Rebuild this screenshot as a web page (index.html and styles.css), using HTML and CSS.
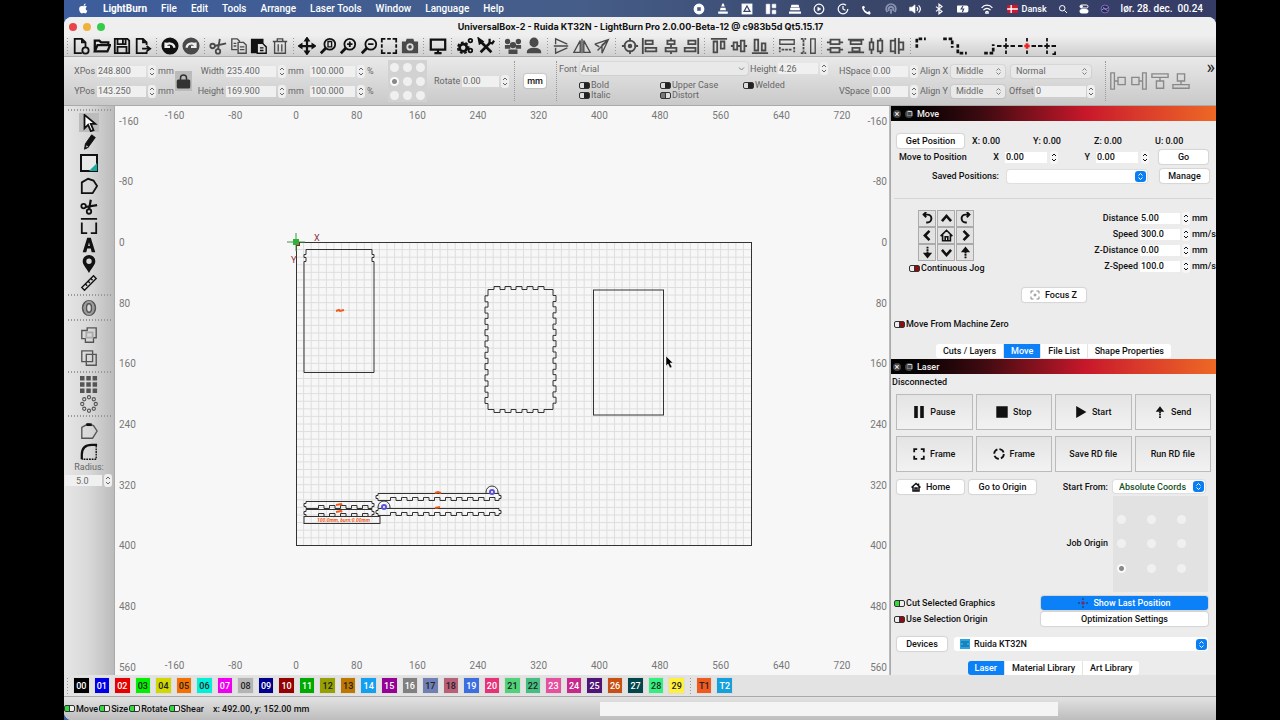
FILE: index.html
```
<!DOCTYPE html>
<html lang="en">
<head>
    <meta charset="UTF-8">
    <meta name="viewport" content="width=device-width, initial-scale=1.0">
    <title>UniversalBox-2 - LightBurn</title>
    <link rel="stylesheet" href="styles.css">
</head>
<body>
    <div class="screen">
        <nav class="menubar">
            <svg class="apple" viewBox="0 0 20 20"><path class="f" d="M14 1c0 2-1.500 4-4 4 0-2 2-4 4-4zM10 6c1.500-1 4-1.500 6 .8-3 2-2.500 6 .8 7.200C16 17 14.500 19 13 19c-1.200 0-1.600-.6-3-.6s-1.800.6-3 .6C4.500 19 2 14.500 2 11c0-5 4-6.500 8-5z"/></svg>
            <a class="app" href="#">LightBurn</a>
            <a href="#">File</a>
            <a href="#">Edit</a>
            <a href="#">Tools</a>
            <a href="#">Arrange</a>
            <a href="#">Laser Tools</a>
            <a href="#">Window</a>
            <a href="#">Language</a>
            <a href="#">Help</a>
            <div class="tray" id="tray"></div>
            <div class="right">
                <span class="lang"><svg class="flag" viewBox="0 0 12 9"><path fill="#d3152c" d="M0 0h12v9H0z"/><path stroke="#fff" stroke-width="1.500" d="M4.500 0v9M0 4.500h12"/></svg>Dansk</span>
                <svg class="icon" viewBox="0 0 20 20"><circle cx="8.500" cy="8.500" r="5.500"/><path d="M13 13l5 5"/></svg>
                <svg class="icon" viewBox="0 0 20 20"><rect x="2" y="2" width="16" height="6" rx="3"/><rect class="f" x="2" y="11" width="16" height="7" rx="3"/><circle class="f" cx="5" cy="5" r="2"/></svg>
                <svg class="icon" viewBox="0 0 20 20"><circle cx="10" cy="10" r="8" fill="#2a2560" stroke="#7b6bb0"/><path stroke="#55d0f0" d="M4 12c4-6 8 2 12-5"/><path stroke="#f06aa8" d="M6 7c3 0 6 6 9 6"/></svg>
                <span class="clock">lør. 28. dec.&nbsp; 00.24</span>
            </div>
        </nav>

        <div class="window">
            <header class="titlebar">
                <div class="lights"><i class="red"></i><i class="yellow"></i><i class="green"></i></div>
                <h1>UniversalBox-2 - Ruida KT32N - LightBurn Pro 2.0.00-Beta-12 @ c983b5d Qt5.15.17</h1>
            </header>

            <div class="toolbar" id="toolbar"></div>

            <div class="props">
                <div class="size-grid">
                    <label for="xpos">XPos</label><input id="xpos" value="248.800"><i class="step"></i><span>mm</span>
                    <button class="lock" aria-label="Lock ratio"><svg class="icon" viewBox="0 0 20 20"><path d="M6 9V6a4 4 0 0 1 8 0v3"/><rect class="f" x="2" y="9" width="16" height="10" rx="1"/></svg></button>
                    <label for="width">Width</label><input id="width" value="235.400"><i class="step"></i><span>mm</span>
                    <input id="wpct" aria-label="Width percent" value="100.000"><i class="step"></i><span>%</span>
                    <label for="ypos">YPos</label><input id="ypos" value="143.250"><i class="step"></i><span>mm</span>
                    <label for="height">Height</label><input id="height" value="169.900"><i class="step"></i><span>mm</span>
                    <input id="hpct" aria-label="Height percent" value="100.000"><i class="step"></i><span>%</span>
                </div>
                <div class="anchor dots" data-name="anchor" data-checked="3"></div>
                <div class="rotate"><label for="rotate">Rotate</label><input id="rotate" value="0.00"><i class="step"></i></div>
                <i class="divider"></i>
                <button class="btn unit">mm</button>
                <i class="divider"></i>
                <div class="font-box">
                    <div class="font-row">
                        <label for="font">Font</label>
                        <select id="font" class="flat wide"><option>Arial</option></select>
                        <label for="fheight">Height</label><input id="fheight" value="4.26"><i class="step"></i>
                    </div>
                    <div class="font-flags">
                        <label><input type="checkbox" class="toggle dark">Bold</label>
                        <label><input type="checkbox" class="toggle dark">Upper Case</label>
                        <label><input type="checkbox" class="toggle dark">Welded</label>
                        <label><input type="checkbox" class="toggle dark">Italic</label>
                        <label><input type="checkbox" class="toggle dark" checked>Distort</label>
                    </div>
                </div>
                <div class="space-grid">
                    <label for="hspace">HSpace</label><input id="hspace" value="0.00"><i class="step"></i>
                    <label for="alignx">Align X</label><select id="alignx" class="flat"><option>Middle</option></select>
                    <select class="flat normal" aria-label="Text mode"><option>Normal</option></select>
                    <label for="vspace">VSpace</label><input id="vspace" value="0.00"><i class="step"></i>
                    <label for="aligny">Align Y</label><select id="aligny" class="flat"><option>Middle</option></select>
                    <div class="offset"><label for="offset">Offset</label><input id="offset" value="0"><i class="step"></i></div>
                </div>
                <i class="divider"></i>
                <div class="dock" id="dock"></div>
                <button class="more" aria-label="More">»</button>
            </div>

            <main class="main">
                <aside class="tools">
                    <div id="tools"></div>
                    <label for="radius">Radius:</label>
                    <div class="radius"><input id="radius" value="5.0"><i class="step"></i></div>
                </aside>

                <section class="canvas">
                    <svg id="canvas" viewBox="115 106 774 569"></svg>
                </section>

                <aside class="side">
                    <section class="panel">
                        <h2><button aria-label="Close">×</button><button aria-label="Float">❐</button>Move</h2>
                        <div class="move">
                            <div class="position">
                                <button class="btn">Get Position</button>
                                <span>X: 0.00</span><span>Y: 0.00</span><span>Z: 0.00</span><span>U: 0.00</span>
                            </div>
                            <div class="goto">
                                <span>Move to Position</span>
                                <label for="gox">X</label><input id="gox" value="0.00"><i class="step"></i>
                                <label for="goy">Y</label><input id="goy" value="0.00"><i class="step"></i>
                                <button class="btn">Go</button>
                            </div>
                            <div class="saved">
                                <label for="saved">Saved Positions:</label>
                                <select id="saved"><option></option></select>
                                <button class="btn">Manage</button>
                            </div>
                            <hr>
                            <div class="jog-row">
                                <div class="jog-box">
                                    <div class="jog" id="jog"></div>
                                    <label><input type="checkbox" class="toggle">Continuous Jog</label>
                                </div>
                                <div class="jog-values">
                                    <label for="dist">Distance</label><input id="dist" value="5.00"><i class="step"></i><span>mm</span>
                                    <label for="speed">Speed</label><input id="speed" value="300.0"><i class="step"></i><span>mm/s</span>
                                    <label for="zdist">Z-Distance</label><input id="zdist" value="0.00"><i class="step"></i><span>mm</span>
                                    <label for="zspeed">Z-Speed</label><input id="zspeed" value="100.0"><i class="step"></i><span>mm/s</span>
                                </div>
                            </div>
                            <button class="btn focus"><svg class="icon" viewBox="0 0 20 20"><path d="M7 2H2v5M13 2h5v5M7 18H2v-5M13 18h5v-5M10 7v6M7 10h6"/></svg>Focus Z</button>
                            <label class="zero"><input type="checkbox" class="toggle">Move From Machine Zero</label>
                        </div>
                        <div class="tabs">
                            <button>Cuts / Layers</button><button class="active">Move</button><button>File List</button><button>Shape Properties</button>
                        </div>
                    </section>

                    <section class="panel">
                        <h2><button aria-label="Close">×</button><button aria-label="Float">❐</button>Laser</h2>
                        <p class="state">Disconnected</p>
                        <div class="actions" id="actions"></div>
                        <div class="origin">
                            <div class="origin-buttons">
                                <button class="btn"><svg class="icon" viewBox="0 0 20 20"><path d="M1 11l9-8 9 8M4 9v9h12V9M15 3v4M8 18v-6h4v6" stroke-width="3"/></svg>Home</button>
                                <button class="btn">Go to Origin</button>
                            </div>
                            <label for="start">Start From:</label>
                            <select id="start" class="coords"><option>Absolute Coords</option></select>
                            <span class="job-label">Job Origin</span>
                            <div class="job dots" data-name="job" data-checked="6"></div>
                        </div>
                        <div class="options">
                            <label><input type="checkbox" class="toggle" checked>Cut Selected Graphics</label>
                            <button class="btn blue"><svg class="icon" viewBox="0 0 20 20"><path stroke="#17305c" d="M10 0v4M10 16v4M0 10h4M16 10h4"/><path stroke="#a8102c" d="M10 6v8M6 10h8"/></svg>Show Last Position</button>
                            <label><input type="checkbox" class="toggle">Use Selection Origin</label>
                            <button class="btn">Optimization Settings</button>
                        </div>
                        <div class="devices">
                            <button class="btn">Devices</button>
                            <div class="device">
                                <svg viewBox="0 0 10 10"><path fill="#2aa5e0" d="M0 0h10v10H0z"/><path fill="none" stroke="#0b5f94" d="M1 3h8M1 7h8M3 5h4"/></svg>
                                <select aria-label="Device"><option>Ruida KT32N</option></select>
                            </div>
                        </div>
                        <div class="tabs last">
                            <button class="active">Laser</button><button>Material Library</button><button>Art Library</button>
                        </div>
                    </section>
                </aside>
            </main>

            <div class="palette" id="palette"></div>

            <footer class="status">
                <label><input type="checkbox" class="toggle" checked>Move</label>
                <label><input type="checkbox" class="toggle" checked>Size</label>
                <label><input type="checkbox" class="toggle" checked>Rotate</label>
                <label><input type="checkbox" class="toggle" checked>Shear</label>
                <span class="coord">x: 492.00, y: 152.00 mm</span>
                <div class="progress"></div>
            </footer>
        </div>
    </div>
    <script src="script.js"></script>
</body>
</html>
```

FILE: styles.css
```
* {
    box-sizing: border-box;
}
body {
    margin: 0;
    background: #000;
    color: #111;
    font-family: Roboto, "Liberation Sans", sans-serif;
    font-size: 9px;
    line-height: 12px;
}
button, input, select {
    font: inherit;
    color: inherit;
    margin: 0;
    padding: 0;
    border: none;
    background: none;
}
a {
    color: inherit;
    text-decoration: none;
}
label, span, button {
    white-space: nowrap;
}
.icon {
    display: block;
    width: 18px;
    height: 18px;
    fill: none;
    stroke: currentColor;
    stroke-width: 2;
}
.f {
    fill: currentColor;
}
.screen {
    display: flex;
    flex-direction: column;
    min-height: 100vh;
    margin: 0 64px;
    background: linear-gradient(90deg, #3d5d9c, #455d88 45%, #394569 70%, #353c66);
}

/* menu bar */
.menubar {
    display: flex;
    align-items: center;
    gap: 14px;
    height: 17px;
    padding: 0 13px 0 14px;
    color: #fff;
    font-size: 10px;
    font-weight: 500;
}
.menubar .app {
    font-weight: 700;
}
.menubar .icon {
    width: 10px;
    height: 10px;
}
.apple {
    width: 11px;
    height: 11px;
}
.tray {
    display: flex;
    gap: 12px;
    margin-left: auto;
}
.tray .icon {
    width: 12px;
    height: 12px;
}
.right {
    display: flex;
    align-items: center;
    gap: 11px;
    font-size: 9px;
}
.clock {
    font-size: 10px;
}
.lang {
    display: flex;
    align-items: center;
    gap: 4px;
}
.flag {
    width: 11px;
    height: 8px;
}

/* window */
.window {
    flex: 1;
    display: flex;
    flex-direction: column;
    background: #ececec;
    border-radius: 8px 8px 0 8px;
    overflow: hidden;
}
.titlebar {
    display: flex;
    align-items: center;
    height: 19px;
    padding: 0 5px;
    background: #efefef;
}
.titlebar h1 {
    flex: 1;
    margin: 0;
    padding-right: 35px;
    text-align: center;
    font-family: Inter, "Liberation Sans", sans-serif;
    font-size: 9px;
    font-weight: 700;
}
.lights {
    display: flex;
    gap: 6px;
    width: 36px;
}
.lights i {
    width: 8px;
    height: 8px;
    border-radius: 50%;
}
.red { background: #e8454b; }
.yellow { background: #f0b03c; }
.green { background: #36cc4b; }

.toolbar {
    display: flex;
    align-items: center;
    height: 21px;
    padding: 0 158px 0 0;
    background: linear-gradient(#eee, #cfcfcf);
    border-bottom: 1px solid #aaa;
}
.toolbar button {
    flex: 1;
    min-width: 0;
    display: flex;
    justify-content: center;
    color: #111;
}
.toolbar button.mid {
    color: #4a4a4a;
}
.sep {
    flex: none;
    width: 7px;
    height: 18px;
    background: radial-gradient(circle, #999 0.5px, transparent 1px) 0 0 / 7px 3px;
}

/* properties bar */
.props {
    display: flex;
    align-items: center;
    height: 49px;
    padding-left: 10px;
    color: #666;
    background: linear-gradient(#e9e9e9, #c9c9c9);
    border-bottom: 1px solid #aaa;
}
.props input:not([type]), .tools input {
    width: 100%;
    min-width: 0;
    height: 11px;
    padding-left: 1px;
    background: #f0f0f0;
}
.step {
    width: 8px;
    height: 13px;
    border-radius: 3px;
    color: #666;
    background: #efefef;
    display: block;
}
.step svg {
    display: block;
    width: 8px;
    height: 13px;
    fill: none;
    stroke: currentColor;
}
.size-grid {
    display: grid;
    grid-template-columns: 21px 49px 8px 15px 20px 27px 50px 8px 20px 45px 8px 10px;
    grid-template-rows: 20px 20px;
    column-gap: 2px;
    align-items: center;
}
.size-grid label {
    text-align: right;
}
.lock {
    grid-row: span 2;
    display: flex;
    align-items: center;
    justify-content: center;
    height: 20px;
    width: 17px;
    background: #bbb;
    color: #333;
}
.lock .icon {
    width: 15px;
}
.dots {
    display: grid;
    grid-template-columns: repeat(3, 1fr);
    justify-items: center;
    align-items: center;
}
.dots input {
    appearance: none;
    width: 9px;
    height: 9px;
    border-radius: 50%;
    background: #f0f0f0;
}
.dots input:checked {
    background: radial-gradient(circle, #888 2px, #fafafa 3px);
}
.anchor {
    width: 39px;
    height: 42px;
    margin-left: 11px;
    background: #d2d2d2;
}
.rotate {
    display: grid;
    grid-template-columns: 26px 37px 8px;
    gap: 2px;
    align-items: center;
    margin-left: 7px;
}
.divider {
    width: 1px;
    height: 40px;
    margin: 0 5px;
    border-left: 1px dotted #999;
}
.btn {
    display: flex;
    align-items: center;
    justify-content: center;
    height: 14px;
    border-radius: 3px;
    background: #fff;
    color: #111;
    box-shadow: 0 0 1px 1px #0000001a;
    font-weight: 500;
}
.unit {
    width: 22px;
    margin: 0 5px 0 4px;
}
.unit + .divider {
    margin-right: 2px;
}
.font-box {
    width: 276px;
}
.font-row {
    display: grid;
    grid-template-columns: 19px 168px 26px 40px 8px;
    column-gap: 2px;
    align-items: center;
    margin-bottom: 5px;
}
.font-flags {
    display: grid;
    grid-template-columns: 81px 83px 1fr;
    line-height: 10px;
    padding-left: 20px;
}
.font-flags label, .jog-box label, .options label, .zero, .status label {
    display: flex;
    align-items: center;
    gap: 1px;
}
.toggle {
    appearance: none;
    flex: none;
    width: 11px;
    height: 7px;
    border: 1px solid #333;
    border-radius: 2px;
    background: linear-gradient(90deg, #eee 45%, #333 45%, #333 55%, #8d0c12 55%);
}
.toggle:checked {
    background: linear-gradient(90deg, #2fdc3a 45%, #333 45%, #333 55%, #eee 55%);
}
.toggle.dark {
    background: linear-gradient(90deg, #ddd 45%, #222 45%);
}
.toggle.dark:checked {
    background: linear-gradient(90deg, #777 45%, #333 45%, #333 55%, #ddd 55%);
}
select {
    appearance: none;
    height: 13px;
    padding-left: 6px;
    border-radius: 3px;
    background: #fff url('data:image/svg+xml,<svg xmlns="http://www.w3.org/2000/svg" width="11" height="11"><rect width="11" height="11" rx="3" fill="%23087ff5"/><path d="M3.500 4.500l2-2 2 2M3.500 6.500l2 2 2-2" fill="none" stroke="white"/></svg>') no-repeat right 1px center;
    box-shadow: 0 0 1px 1px #00000010;
}
select.flat {
    padding-left: 5px;
    background: #e9e9e9 url('data:image/svg+xml,<svg xmlns="http://www.w3.org/2000/svg" width="11" height="11"><path d="M3.500 4.500l2-2 2 2M3.500 6.500l2 2 2-2" fill="none" stroke="gray"/></svg>') no-repeat right 1px center;
}
select.wide {
    padding-left: 1px;
    background-image: url('data:image/svg+xml,<svg xmlns="http://www.w3.org/2000/svg" width="11" height="11"><path d="M3 4.500l2.500 2.500 2.500-2.500" fill="none" stroke="gray"/></svg>');
}
.space-grid {
    display: grid;
    grid-template-columns: 31px 36px 8px 29px 54px 84px;
    grid-template-rows: 20px 20px;
    column-gap: 2px;
    align-items: center;
    margin-left: 4px;
}
.normal {
    margin-left: 4px;
}
.offset {
    display: grid;
    grid-template-columns: 25px 51px 8px;
    gap: 1px;
    align-items: center;
    margin-left: 2px;
}
.space-grid + .divider {
    margin-left: 14px;
    margin-right: 3px;
}
.dock {
    display: flex;
    gap: 3px;
    color: #888;
}
.more {
    align-self: flex-start;
    margin: 3px 0 0 auto;
    padding-right: 1px;
    font-size: 18px;
    line-height: 14px;
    color: #222;
}

/* work area */
.main {
    display: grid;
    grid-template-columns: 51px minmax(0, 1fr) 326px;
}
.tools {
    background: linear-gradient(90deg, #e6e6e6, #d8d8d8 50%, #bbb);
    border-right: 1px solid #aaa;
    color: #666;
    text-align: center;
    padding-top: 1px;
}
.tools button {
    display: flex;
    align-items: center;
    justify-content: center;
    width: 20px;
    height: 19px;
    margin: 0 auto;
    color: #111;
}
.tools button.tall {
    height: 23px;
}
.tools button.mid {
    color: #555;
}
.tools button.active {
    background: #bcbcbc;
    height: 19px;
}
.tools .sep {
    display: block;
    width: 44px;
    height: 6px;
    margin: 0 auto;
    background: radial-gradient(circle, #999 0.5px, transparent 1px) 0 0 / 3px 6px;
}
.tools > label {
    display: block;
}
.radius {
    display: grid;
    grid-template-columns: 37px 8px;
    align-items: center;
    gap: 2px;
    margin-top: 1px;
    padding-left: 1px;
}
.tools input {
    padding-left: 11px;
}
.canvas {
    background: #f7f7f7;
    border-right: 1px solid #bbb;
}
.canvas svg {
    display: block;
    width: 100%;
}
.ruler {
    fill: #777;
    font-size: 10px;
}
.cut {
    fill: none;
    stroke: #333;
}
.mark {
    fill: none;
    stroke: #f05a1a;
}

/* side panels */
.side {
    background: #ececec;
    border-left: 1px solid #aaa;
    font-weight: 500;
}
.panel h2 {
    display: flex;
    align-items: center;
    gap: 4px;
    height: 15px;
    margin: 0;
    padding-left: 2px;
    color: #eee;
    font-size: 9px;
    font-weight: 500;
    background: linear-gradient(90deg, #050203 8%, #3d0a10 28%, #c8182b 60%, #d8372b 75%, #ee6825);
}
.panel h2 button {
    width: 8px;
    height: 8px;
    border-radius: 50%;
    background: #444;
    line-height: 8px;
    font-size: 9px;
}
.panel h2 button + button {
    font-size: 6px;
}
.side input:not([type]) {
    width: 100%;
    min-width: 0;
    height: 11px;
    padding-left: 1px;
    background: #fff;
}
.side .step {
    color: #111;
    background: #f6f6f6;
}
.side .btn .icon {
    width: 10px;
    height: 10px;
    margin-right: 5px;
}
.move {
    padding: 13px 0 14px;
}
.position {
    display: grid;
    grid-template-columns: 67px 53px 53px 53px 1fr;
    gap: 8px;
    align-items: center;
    padding-left: 6px;
}
.goto {
    display: grid;
    grid-template-columns: 80px 20px 42px 8px 32px 42px 8px 56px;
    column-gap: 3px;
    align-items: center;
    margin: 2px 0 5px;
    padding-left: 8px;
}
.goto label {
    text-align: right;
    padding-right: 3px;
}
.goto .btn {
    margin-left: 7px;
}
.saved {
    display: grid;
    grid-template-columns: 1fr 140px 54px;
    column-gap: 8px;
    align-items: center;
    padding: 0 7px 0 5px;
}
.saved label {
    text-align: right;
}
.saved .btn {
    margin-left: 5px;
}
.move hr {
    margin: 15px 3px 11px;
    border: none;
    border-top: 1px solid #d6d6d6;
}
.jog-row {
    display: flex;
    justify-content: space-between;
    padding: 0 0 0 18px;
}
.jog {
    display: grid;
    grid-template-columns: repeat(3, 18px);
    grid-auto-rows: 17px;
    column-gap: 1px;
    margin: 0 0 1px 9px;
}
.jog button {
    display: flex;
    align-items: center;
    justify-content: center;
    border: 1px solid #aaa;
    background: #e2e2e2;
}
.jog .icon {
    width: 13px;
    height: 13px;
    stroke-width: 3;
}
.jog-values {
    display: grid;
    grid-template-columns: auto 40px 8px 24px;
    grid-auto-rows: 16px;
    column-gap: 2px;
    align-items: center;
}
.jog-values label {
    text-align: right;
}
.focus {
    width: 64px;
    margin: 14px auto;
}
.focus .icon {
    color: #888;
}
.zero {
    padding: 2px 0 0 3px;
}
.tabs {
    display: flex;
    justify-content: center;
    padding-bottom: 1px;
}
.tabs button {
    height: 14px;
    padding: 0 7px;
    background: #fff;
    border-right: 1px solid #e3e3e3;
}
.tabs button.active {
    background: #0b80f7;
    color: #fff;
}
.tabs button:first-child {
    border-radius: 3px 0 0 3px;
}
.tabs button:last-child {
    border-radius: 0 3px 3px 0;
    border-right: none;
}
.state {
    margin: 2px 0 6px 1px;
}
.actions {
    display: grid;
    grid-template-columns: repeat(4, 1fr);
    grid-auto-rows: 36px;
    gap: 6px 3px;
    padding: 0 5px;
}
.actions button {
    display: flex;
    align-items: center;
    justify-content: center;
    gap: 5px;
    border: 1px solid #bbb;
    background: linear-gradient(#e4e4e4, #f2f2f2);
}
.actions .icon {
    width: 12px;
    height: 12px;
    stroke-width: 3;
}
.origin {
    display: grid;
    grid-template-columns: 140px 1fr 95px;
    column-gap: 5px;
    padding: 8px 8px 0 6px;
}
.origin > label, .job-label {
    text-align: right;
    align-self: center;
}
.origin-buttons {
    display: flex;
    gap: 5px;
}
.origin-buttons .btn {
    width: 67px;
}
.coords {
    width: 92px;
    color: #17501c;
}
.job-label {
    grid-column: 2;
}
.job {
    grid-template-columns: repeat(3, 30px);
    justify-items: start;
    height: 96px;
    margin-top: 2px;
    padding: 11px 0 11px 4px;
    background: #e2e2e2;
}
.options {
    display: grid;
    grid-template-columns: 1fr 167px;
    row-gap: 2px;
    padding: 4px 8px 0 3px;
}
.btn.blue {
    background: #0b80f7;
    color: #fff;
}
.devices {
    display: grid;
    grid-template-columns: 50px 1fr;
    gap: 7px;
    padding: 11px 8px 10px 6px;
}
.device {
    display: flex;
    align-items: center;
    gap: 2px;
    padding-left: 6px;
    background: #fff;
    border-radius: 3px;
}
.device svg {
    width: 10px;
    height: 10px;
}
.device select {
    flex: 1;
    padding-left: 2px;
    box-shadow: none;
}
.tabs.last {
    padding-bottom: 0;
}

/* palette and status bar */
.palette {
    display: flex;
    align-items: center;
    height: 22px;
    padding: 0 481px 0 0;
    background: #e3e3e3;
    border-bottom: 1px solid #aaa;
}
.palette button {
    flex: 1;
    height: 17px;
    margin: 0 2px;
    border: 1px solid #ddd;
    font-weight: 500;
}
.status {
    flex: 1;
    display: flex;
    align-items: center;
    gap: 1px;
    min-height: 23px;
    font-weight: 500;
    background: linear-gradient(#e2e2e2, #bdbdbd);
}
.coord {
    margin-left: 8px;
}
.progress {
    width: 458px;
    height: 14px;
    margin: 0 158px 0 auto;
    background: #f4f4f4;
}
```

FILE: script.js
```
const icon = (inner) => `<svg class="icon" viewBox="0 0 20 20">${inner}</svg>`;

// every entry: [label, drawing, class]
const topTools = [
    [
        ['New', '<path d="M11 18H3V2h8l4 4v5M11 2v4h4"/><circle cx="15" cy="15" r="3.500"/>'],
        ['Open', '<path d="M2 16V4h5l2 2h8v3M2 16l3-7h14l-3 7z" stroke-width="2.500"/>'],
        ['Save', '<path d="M2 2h14l2 2v14H2zM5 2v6h9V2M5 18v-7h10v7M11 3v4"/>'],
        ['Export', '<path d="M14 9V6l-4-4H3v16h11v-2M10 2v4h4M9 13h8M14 10l4 3-4 3"/>']
    ],
    [
        ['Undo', '<circle class="f" cx="10" cy="10" r="8.500"/><path stroke="#eee" stroke-width="2.500" d="M5 10c2-4 9-4 10 2M5 6v5h5"/>'],
        ['Redo', '<circle class="f" cx="10" cy="10" r="8.500"/><path stroke="#eee" stroke-width="2.500" d="M15 10c-2-4-9-4-10 2M15 6v5h-5"/>', 'mid']
    ],
    [
        ['Cut', '<circle cx="4" cy="10" r="2.500"/><circle cx="10" cy="16" r="2.500"/><path d="M6 10l13-3M10 14l2-12"/>', 'mid'],
        ['Copy', '<path d="M8 14H2V2h6l3 3M9 6h6l3 3v9H9zM4 7h3M4 10h3M11 11h5M11 14h5" stroke-width="1.500"/>', 'mid'],
        ['Paste', '<path class="f" d="M2 3h12v4H8v10H2z"/><path d="M8 7h6l4 4v7H8zM11 12h4M11 15h4" stroke-width="1.500" fill="#ddd"/>'],
        ['Delete', '<path d="M2 5h16M7 5V2h6v3M4 5v13h12V5M8 8v8M12 8v8" stroke-width="1.500"/>', 'mid']
    ],
    [
        ['Pan', '<path d="M10 3v14M3 10h14" stroke-width="2.500"/><path class="f" d="M10 1l2 3H8zM10 19l2-3H8zM1 10l3-2v4zM19 10l-3-2v4z"/>'],
        ['Zoom page', '<circle cx="12" cy="8" r="6"/><path d="M8 12l-6 6" stroke-width="3"/><path d="M10 5h4v6h-4z" stroke-width="1.500"/>'],
        ['Zoom in', '<circle cx="12" cy="8" r="6"/><path d="M8 12l-6 6" stroke-width="3"/><path d="M9 8h6M12 5v6"/>'],
        ['Zoom out', '<circle cx="12" cy="8" r="6"/><path d="M8 12l-6 6" stroke-width="3"/><path d="M9 8h6"/>'],
        ['Frame selection', '<path d="M2 6V2h4M14 2h4v4M18 14v4h-4M6 18H2v-4M8 2h4M8 18h4M2 8v4M18 8v4"/>'],
        ['Camera', '<path class="f" d="M2 6h4l1-3h6l1 3h4v11H2z"/><circle cx="10" cy="11" r="3" stroke="#ddd"/>', 'mid']
    ],
    [['Preview', '<path d="M2 3h16v11H2zM10 14v4M6 18h8" stroke-width="2.500"/>']],
    [
        ['Settings', '<circle cx="8" cy="12" r="4" stroke-width="3"/><circle cx="8" cy="12" r="6" stroke-dasharray="3 2"/><circle cx="16" cy="4" r="2"/><circle cx="16" cy="15" r="2"/>'],
        ['Device settings', '<path d="M4 17L15 6M4 5l12 12" stroke-width="3"/><path d="M14 2v4l3 1 2-3M2 2l4 3-3 2z" stroke-width="2.500"/>']
    ],
    [
        ['Group', '<circle class="f" cx="10" cy="9" r="2.500"/><circle class="f" cx="4" cy="5" r="2"/><circle class="f" cx="16" cy="5" r="2"/><path class="f" d="M6 18v-3h8v3zM2 12v-2h4v2zM14 12v-2h4v2z"/>', 'mid'],
        ['User', '<ellipse class="f" cx="10" cy="6" rx="4" ry="4.500"/><path class="f" d="M3 17c0-3 4-4 7-4s7 1 7 4z"/>', 'mid']
    ],
    [
        ['Mirror vertical', '<path d="M4 8V2l13 6M4 12v6l13-6M2 10h16" stroke-width="1.500"/>', 'mid'],
        ['Mirror horizontal', '<path d="M8 4v13H1zM12 4v13h7zM10 2v16" stroke-width="1.500"/>', 'mid'],
        ['Mirror line', '<path d="M2 8l15-5-7 15M17 3L5 15M2 8l5 3M10 18V9l7-6" stroke-width="1.500"/>', 'mid']
    ],
    [
        ['Center', '<circle cx="10" cy="10" r="6"/><circle class="f" cx="10" cy="10" r="1.500"/><path d="M10 1v4M10 15v4M1 10h4M15 10h4"/>', 'mid'],
        ['Align left', '<path d="M2 1v18M5 4h8v4H5zM5 12h12v4H5z"/>', 'mid'],
        ['Align center', '<path d="M10 1v3M10 8v4M10 16v3M6 4h8v4H6zM4 12h12v4H4z"/>', 'mid'],
        ['Align right', '<path d="M18 1v18M7 4h8v4H7zM3 12h12v4H3z"/>', 'mid']
    ],
    [
        ['Align top', '<path d="M1 2h18M4 5h4v12H4zM12 5h4v8h-4z"/>', 'mid'],
        ['Align middle', '<path d="M1 10h3M8 10h4M16 10h3M4 6h4v8H4zM12 4h4v12h-4z"/>', 'mid'],
        ['Align bottom', '<path d="M1 18h18M4 3h4v12H4zM12 7h4v8h-4z"/>', 'mid']
    ],
    [
        ['Same width', '<path d="M2 3h16v5H2z" stroke-width="1.500"/><path d="M2 11v6M18 11v6M4 14h12" stroke-dasharray="3 1"/>', 'mid'],
        ['Same height', '<path d="M13 2h5v16h-5z" stroke-width="1.500"/><path d="M2 2h6M2 18h6M5 3v14" stroke-dasharray="3 1"/>', 'mid']
    ],
    [
        ['Distribute V', '<path d="M1 6h4M15 6h4M1 14h4M15 14h4M5 3h10v5H5zM5 12h10v5H5z"/>', 'mid'],
        ['Distribute V centers', '<path d="M1 3h18M1 17h18M4 4h12v4H4zM6 12h8v4H6z"/>', 'mid'],
        ['Distribute H', '<path d="M5 1v5M5 14v5M15 1v3M15 16v3M3 6h4v8H3zM12 4h5v12h-5z"/>', 'mid'],
        ['Distribute H centers', '<path d="M8 1v18M12 1v18M3 4h5v12H3zM12 6h5v8h-5z"/>', 'mid']
    ],
    [
        ['Top left', '<path stroke-width="3" stroke-dasharray="4 2" d="M2 12V2h10"/>'],
        ['Top right', '<path stroke-width="3" stroke-dasharray="4 2" d="M8 2h10v10"/>'],
        ['Bottom left', '<path stroke-width="3" stroke-dasharray="4 2" d="M2 8v10h10"/>'],
        ['Bottom right', '<path stroke-width="3" stroke-dasharray="4 2" d="M8 18h10V8"/>'],
        ['Cross', '<path d="M10 1v4M10 15v4M0 10h5M15 10h5"/><path d="M10 7v6M7 10h6"/>'],
        ['Cross red', '<path d="M10 1v4M10 15v4M0 10h5M15 10h5"/><path stroke="#e22" stroke-width="3" d="M10 7v6M7 10h6"/>'],
        ['Cross corner', '<path d="M10 1v4M10 15v4M0 10h5M15 10h5"/><path d="M10 7v6M7 10h6M16 19h3v-3"/>']
    ]
];

let cells = '';
for (const y of [0, 7, 14]) for (const x of [0, 7, 14]) cells += `M${x} ${y}h5v5h-5z`;
let ring = '';
for (let i = 0; i < 8; i++) {
    const a = i * Math.PI / 4;
    ring += `<circle cx="${10 + 7.5 * Math.sin(a)}" cy="${10 + 7.5 * Math.cos(a)}" r="1.800" stroke-width="1.200"/>`;
}

const sideTools = [
    [
        ['Select', '<path d="M5 1v15l4-4 3 7 3-1-3-7h5z" fill="#fff"/>', 'active'],
        ['Draw', '<path class="f" d="M5 18l1-6L13 2l4 3-8 11z" stroke-width="1"/><path d="M7 13l3 2-4 2z" fill="#ddd" stroke-width="1"/>'],
        ['Rectangle', '<path fill="#e8e8e8" stroke-width="2.500" d="M1 1h18v18H1z"/><path fill="#19a89b" stroke="none" d="M19 10v9h-9z"/>', 'tall'],
        ['Polygon', '<path d="M2 6l7-4 6 2 4 6-5 8H2z"/>', 'tall'],
        ['Trim', '<circle cx="4" cy="9" r="2.500"/><circle cx="10" cy="15" r="2.500"/><path d="M6 10l13-2M10 13l2-11" stroke-width="2.500"/>'],
        ['Tabs', '<path d="M1 2h18M8 18H2V6M12 18h6V6"/>'],
        ['Text', '<path class="f" stroke="none" fill-rule="evenodd" d="M3 18L8 2h4l5 16h-4l-1-4H8l-1 4zM9 11h2l-1-4z"/>'],
        ['Marker', '<path class="f" fill-rule="evenodd" stroke="none" d="M10 20C6 13 3 11 3 7a7 7 0 0 1 14 0c0 4-3 6-7 13zM10 4a3 3 0 1 0 0 6 3 3 0 0 0 0-6z"/>'],
        ['Measure', '<path d="M2 15L15 2l3 3L5 18zM12 5l2 2M9 8l2 2M6 11l2 2" stroke-width="1.500"/>']
    ],
    [['Offset', '<ellipse cx="10" cy="10" rx="7" ry="8"/><ellipse cx="10" cy="10" rx="3" ry="5"/><ellipse cx="10" cy="10" rx="5" ry="7" stroke="#999"/>', 'mid']],
    [
        ['Union', '<path d="M2 5h6V2h10v11h-3v5H6v-4H2z" stroke-width="1.500"/><path stroke="#aaa" d="M7 7h7v6H7z"/>', 'mid tall'],
        ['Boolean', '<path d="M2 2h12v12H2zM7 6h11v12H7z" stroke-width="1.500"/>', 'mid tall']
    ],
    [
        ['Grid array', `<path class="f" stroke="none" d="${cells}"/>`, 'mid'],
        ['Circular array', ring, 'mid']
    ],
    [
        ['Start point', '<path d="M2 6l7-4 6 2 4 6-5 8H2z" stroke-width="1.500"/><path stroke="#111" stroke-width="3" d="M7 3h6"/>', 'mid tall'],
        ['Radius', '<path d="M2 18v-5C2 6 6 2 13 2h6" stroke-width="2.500"/><path stroke-dasharray="2 1" stroke-width="1.500" d="M18 3v15H2"/>']
    ]
];

const button = ([label, inner, cls]) =>
    `<button aria-label="${label}" class="${cls || ''}">${icon(inner)}</button>`;
const groups = (list) => list.map(g => '<i class="sep"></i>' + g.map(button).join('')).join('');
const fill = (id, html) => { document.getElementById(id).innerHTML = html; };

fill('toolbar', groups(topTools));
fill('tools', groups(sideTools));

fill('dock', [
    '<path d="M2 1h4v18H2zM6 10h4M10 6h8v8h-8z"/>',
    '<path d="M14 1h4v18h-4zM10 10h4M2 6h8v8H2z"/>',
    '<path d="M1 2h18v4H1zM10 6v4M6 10h8v8H6z"/>',
    '<path d="M1 14h18v4H1zM10 10v4M6 2h8v8H6z"/>'
].map(d => icon(d.replace('/>', ' stroke-width="1.500"/>'))).join(''));

fill('tray', [
    '<circle class="f" cx="10" cy="10" r="8"/><path fill="#455d88" stroke="none" d="M7 7h6v6H7z"/>',
    '<path class="f" stroke="none" d="M9 1h2l2 5H7zM6 8h8l1 4H5zM2 14h16v4H2z"/>',
    '<rect class="f" x="2" y="2" width="16" height="16"/><path stroke="#34456b" d="M10 5l5 9H5z"/>',
    '<path class="f" d="M2 2h6v16H2zM12 2h6v6h-6zM12 12h6v6h-6z" stroke-width="1"/>',
    '<path class="f" stroke="none" d="M4 3h12l1 4H3zM2 8h16v4H2zM0 14h20v4H0z"/>',
    '<circle cx="10" cy="10" r="8"/><path class="f" d="M8 7l5 3-5 3z" stroke-width="1"/>',
    '<circle cx="10" cy="10" r="8" stroke-dasharray="42 8"/><path d="M10 5v5l4 2"/>',
    '<path stroke-width="3" d="M3 6c0 6 5 11 12 12M3 6l3 2M15 18l-2-4"/>',
    '<path stroke="#8a93b3" stroke-width="3" d="M4 15a8 8 0 1 1 12 0M7 13a4 4 0 1 1 6 0M10 10v8"/>',
    '<path class="f" d="M1 7h4l5-4v14l-5-4H1z" stroke-width="1"/><path d="M13 7c2 2 2 4 0 6M16 4c4 4 4 8 0 12"/>',
    '<path d="M5 6l10 8-5 4V2l5 4L5 14"/>',
    '<rect x="0" y="5" width="18" height="10" rx="2" class="f"/><path stroke="#39436a" d="M10 5l-3 5h4l-2 5"/>',
    '<path d="M1 8c5-6 13-6 18 0M4 12c4-4 8-4 12 0M8 15c1-1 3-1 4 0v2H8z"/>'
].map(icon).join(''));

fill('jog', [
    ['Rotate left', '<path d="M4 4h6a6 6 0 0 1 0 12H8M8 0L4 4l4 4"/>'],
    ['Up', '<path d="M3 14l7-8 7 8" stroke-width="4"/>'],
    ['Rotate right', '<path d="M16 4h-6a6 6 0 0 0 0 12h2M12 0l4 4-4 4"/>'],
    ['Left', '<path d="M13 3l-7 7 7 7" stroke-width="4"/>'],
    ['Home', '<path stroke-width="2.500" d="M1 11l9-9 9 9M4 9v9h12V9M8 18v-6h4v6"/>'],
    ['Right', '<path d="M7 3l7 7-7 7" stroke-width="4"/>'],
    ['Z down', '<path stroke-dasharray="3 1" d="M10 1v12"/><path class="f" d="M6 12h8l-4 5z"/>'],
    ['Down', '<path d="M3 6l7 8 7-8" stroke-width="4"/>'],
    ['Z up', '<path stroke-dasharray="3 1" d="M10 19V7"/><path class="f" d="M6 8h8l-4-5z"/>']
].map(button).join(''));

fill('actions', [
    ['Pause', '<path stroke-width="6" d="M5 0v20M15 0v20"/>'],
    ['Stop', '<path class="f" d="M2 2h16v16H2z"/>'],
    ['Start', '<path class="f" stroke="none" d="M2 0l17 10L2 20z"/>'],
    ['Send', '<path stroke-dasharray="3 1" d="M10 20V8"/><path class="f" d="M6 8h8l-4-5z"/>'],
    ['Frame', '<path d="M7 2H2v5M13 2h5v5M2 13v5h5M18 13v5h-5"/>'],
    ['Frame', '<circle cx="10" cy="10" r="8" stroke-dasharray="9 3.500"/>'],
    ['Save RD file'],
    ['Run RD file']
].map(([t, d]) => `<button>${d ? icon(d) : ''}${t}</button>`).join(''));

document.querySelectorAll('.step').forEach(s => {
    s.innerHTML = '<svg viewBox="0 0 8 13"><path d="M2 5l2-2 2 2M2 8l2 2 2-2"/></svg>';
});
document.querySelectorAll('.dots').forEach(d => {
    for (let i = 0; i < 9; i++) {
        const on = i == d.dataset.checked ? 'checked' : '';
        d.innerHTML += `<input type="radio" name="${d.dataset.name}" aria-label="Origin ${i + 1}" ${on}>`;
    }
});

// layer colours, light ones get a dark number
const layers = ['#000000', '#0000e6', '#e60000', '#00f000', '#d0d800', '#f57000', '#00f0d8', '#f000f0', '#b4b4b4', '#00008c',
    '#960000', '#00aa00', '#96a000', '#be7800', '#14a0f0', '#960096', '#808080', '#7080b4', '#b86078', '#3c6ee0',
    '#e63278', '#50d278', '#46be82', '#e650a0', '#c8288c', '#501478', '#c85014', '#00464b', '#32f07d', '#fff03c'];
const darkText = [3, 4, 5, 6, 8, 12, 13, 17, 18, 21, 22, 28, 29];
const swatch = (c, text, dark) => `<button style="background:${c};color:${dark ? '#222' : '#fff'}">${text}</button>`;
fill('palette', '<i class="sep"></i>'
    + layers.map((c, i) => swatch(c, String(i).padStart(2, '0'), darkText.includes(i))).join('')
    + '<i class="sep"></i>' + swatch('#f05a1e', 'T1', true) + swatch('#14a0dc', 'T2'));

// work area
const ox = 296, oy = 242, unit = 455 / 600;
let art = '';
let grid = '';
for (let i = 1; i < 60; i++) grid += `M${ox + i * 10 * unit} 242v303`;
for (let i = 1; i < 40; i++) grid += `M296 ${oy + i * 10 * unit}h455`;
art += `<path d="${grid}" stroke="#dedede" fill="none"/>`;
art += '<rect class="cut" x="296.500" y="242.500" width="455" height="303"/>';
for (let v = -160; v <= 720; v += 80) {
    const x = ox + v * unit;
    art += `<text class="ruler" text-anchor="middle" x="${x}" y="119">${v}</text>`;
    art += `<text class="ruler" text-anchor="middle" x="${x}" y="669">${v}</text>`;
}
for (let v = -160; v <= 560; v += 80) {
    const y = oy + v * unit + 4;
    art += `<text class="ruler" x="119" y="${y}">${v}</text>`;
    art += `<text class="ruler" text-anchor="end" x="887" y="${y}">${v}</text>`;
}

// finger-jointed panel, teeth on all four sides
let box = 'M488 289.500h6';
for (let i = 0; i < 5; i++) box += 'v-3h6v3' + (i < 4 ? 'h5' : 'h9');
box += 'v6';
for (let i = 0; i < 10; i++) box += 'h3v6h-3' + (i < 9 ? 'v5.300' : 'v6.300');
box += 'h-9';
for (let i = 0; i < 5; i++) box += 'v3h-6v-3' + (i < 4 ? 'h-5' : 'h-6');
box += 'v-6';
for (let i = 0; i < 10; i++) box += 'h-3v-6h3' + (i < 9 ? 'v-5.300' : '');
art += `<path class="cut" d="${box}z"/>`;

// strip with slots along the lower edge
function strip(x, y, w, n, pitch, h) {
    let d = `M${x + 2} ${y}h${w - 4}v2h2v3h-2v${h - 5}h-4`;
    for (let i = 0; i < n; i++) d += `v-3h-${pitch / 2}v3h-${pitch / 2}`;
    return `<path class="cut" d="${d}H${x + 2}v-${h - 5}h-2v-3h2z"/>`;
}
art += strip(376, 493.5, 125, 10, 11, 7) + strip(376, 508.5, 125, 10, 11, 7);
art += strip(304, 501.5, 70, 5, 11, 7) + strip(304, 509.5, 70, 5, 11, 7);
art += `<path class="cut" d="M306 249.500h66v5h2v3h-2v4h2v111h-70v-111h2v-4h-2v-3h2z"/>
    <rect class="cut" x="593.500" y="290" width="70" height="125"/>
    <rect class="cut" x="304" y="516.500" width="76" height="7"/>
    <path class="cut" fill="#f7f7f7" d="M486 493v-1a6 6 0 0 1 12 0v1M378 508v-1a6 6 0 0 1 12 0v1"/>
    <circle cx="492" cy="492" r="2" fill="#fff" stroke="#5a50e0" stroke-width="2"/>
    <circle cx="384" cy="507" r="2" fill="#fff" stroke="#5a50e0" stroke-width="2"/>
    <path class="mark" stroke-width="2" d="M336 311l3-1 1 1 4-1M435 493l3-1 3 1M435 508l5-1M336 505l5-1 1 1M336 512l5-1 1 1"/>
    <text x="317" y="522" font-size="5" font-style="italic" font-weight="700" fill="#f05a1a">100.0mm, burn:0.00mm</text>
    <path stroke="#3a9c45" d="M287 242h18M296 233v18"/>
    <path fill="#8a2018" d="M296 242h4v4h-4z"/><path fill="#2fb23b" d="M293 239h6v6h-6z"/>
    <text x="314" y="241" font-size="9" fill="#8c3038">X</text>
    <text x="291" y="263" font-size="9" fill="#8c3038">Y</text>
    <path fill="#000" stroke="#fff" stroke-width=".5" d="M666 356v10l2-2 2 4 2-1-2-4h3z"/>`;
fill('canvas', art);
```
